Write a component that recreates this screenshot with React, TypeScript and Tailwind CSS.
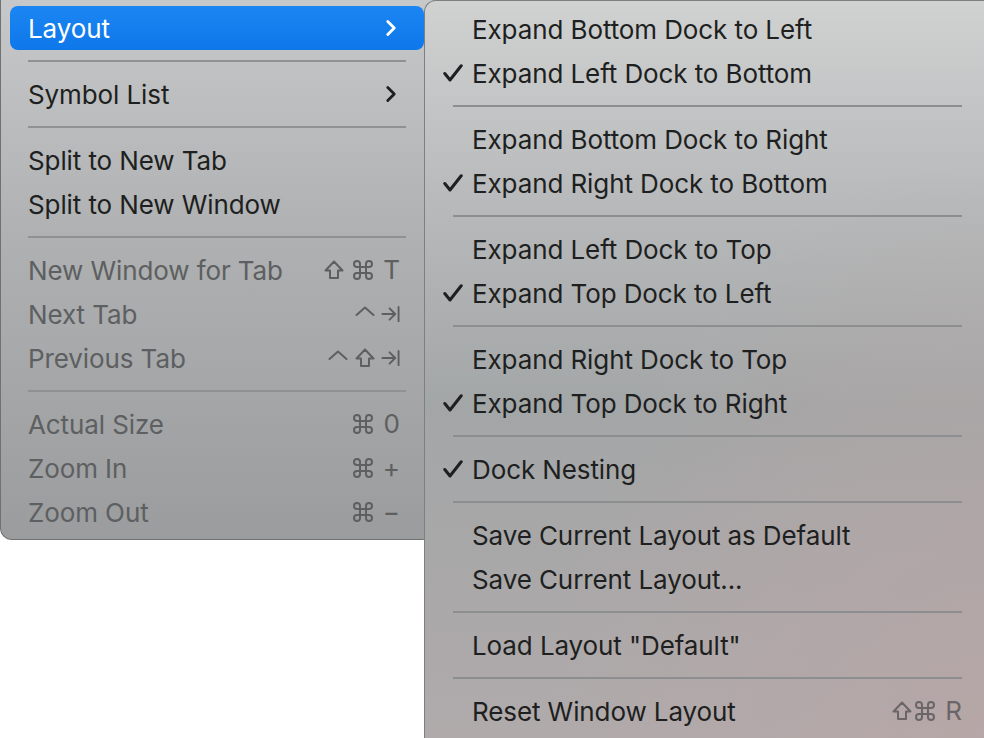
import { ChevronRight } from "lucide-react";

const FONT = "font-['Inter','Noto_Sans',sans-serif]";

type Mod = "shift" | "cmd" | "ctrl";

const ShiftIcon = () => (
  <svg viewBox="0 0 20 20" className="w-[20px] h-[20px]" fill="none" stroke="currentColor" strokeWidth={2} strokeLinejoin="round">
    <path d="M10 1.5 L1.5 10.5 H6 V18 H14 V10.5 H18.5 Z" />
  </svg>
);

const CmdIcon = () => (
  <svg viewBox="0 0 24 24" className="w-[24px] h-[24px]" fill="none" stroke="currentColor" strokeWidth={2} strokeLinecap="round" strokeLinejoin="round">
    <path d="M15 6v12a3 3 0 1 0 3-3H6a3 3 0 1 0 3 3V6a3 3 0 1 0-3 3h12a3 3 0 1 0-3-3" />
  </svg>
);

const CtrlIcon = () => (
  <svg viewBox="0 0 20 20" className="w-[20px] h-[20px]" fill="none" stroke="currentColor" strokeWidth={2} strokeLinecap="round" strokeLinejoin="round">
    <path d="M1.5 11 L10 3.5 L18.5 11" />
  </svg>
);

const TabIcon = () => (
  <svg viewBox="0 0 20 20" className="w-[19px] h-[20px]" fill="none" stroke="currentColor" strokeWidth={2} strokeLinecap="round" strokeLinejoin="round">
    <path d="M1.5 10 H14.5 M9 4 L15 10 L9 16 M18.5 2.5 V17.5" />
  </svg>
);

const MOD_ICONS: Record<Mod, () => React.ReactElement> = {
  shift: ShiftIcon,
  cmd: CmdIcon,
  ctrl: CtrlIcon,
};

const CheckIcon = () => (
  <svg viewBox="0 0 20 18" className="w-[20px] h-[18px]" fill="none" stroke="currentColor" strokeWidth={3} strokeLinecap="round" strokeLinejoin="round">
    <path d="M1.8 9.5 L7 16 L18.2 1.8" />
  </svg>
);

type Shortcut = { mods: Mod[]; key: React.ReactNode };

type Item =
  | { type: "sep" }
  | {
      type: "item";
      label: string;
      disabled?: boolean;
      submenu?: boolean;
      active?: boolean;
      checked?: boolean;
      shortcut?: Shortcut;
    };

const leftItems: Item[] = [
  { type: "item", label: "Layout", submenu: true, active: true },
  { type: "sep" },
  { type: "item", label: "Symbol List", submenu: true },
  { type: "sep" },
  { type: "item", label: "Split to New Tab" },
  { type: "item", label: "Split to New Window" },
  { type: "sep" },
  { type: "item", label: "New Window for Tab", disabled: true, shortcut: { mods: ["shift", "cmd"], key: "T" } },
  { type: "item", label: "Next Tab", disabled: true, shortcut: { mods: ["ctrl"], key: <TabIcon /> } },
  { type: "item", label: "Previous Tab", disabled: true, shortcut: { mods: ["ctrl", "shift"], key: <TabIcon /> } },
  { type: "sep" },
  { type: "item", label: "Actual Size", disabled: true, shortcut: { mods: ["cmd"], key: "0" } },
  { type: "item", label: "Zoom In", disabled: true, shortcut: { mods: ["cmd"], key: "+" } },
  { type: "item", label: "Zoom Out", disabled: true, shortcut: { mods: ["cmd"], key: "−" } },
];

const rightItems: Item[] = [
  { type: "item", label: "Expand Bottom Dock to Left" },
  { type: "item", label: "Expand Left Dock to Bottom", checked: true },
  { type: "sep" },
  { type: "item", label: "Expand Bottom Dock to Right" },
  { type: "item", label: "Expand Right Dock to Bottom", checked: true },
  { type: "sep" },
  { type: "item", label: "Expand Left Dock to Top" },
  { type: "item", label: "Expand Top Dock to Left", checked: true },
  { type: "sep" },
  { type: "item", label: "Expand Right Dock to Top" },
  { type: "item", label: "Expand Top Dock to Right", checked: true },
  { type: "sep" },
  { type: "item", label: "Dock Nesting", checked: true },
  { type: "sep" },
  { type: "item", label: "Save Current Layout as Default" },
  { type: "item", label: "Save Current Layout..." },
  { type: "sep" },
  { type: "item", label: 'Load Layout "Default"' },
  { type: "sep" },
  { type: "item", label: "Reset Window Layout", shortcut: { mods: ["shift", "cmd"], key: "R" } },
];

// modifiers on the left, key in a fixed right-aligned column
const ShortcutView = ({ shortcut, tight }: { shortcut: Shortcut; tight?: boolean }) => (
  <div className="flex items-center">
    <div className={tight ? "flex items-center gap-[1px]" : "flex items-center gap-[7px]"}>
      {shortcut.mods.map((m, i) => {
        const Icon = MOD_ICONS[m];
        return <Icon key={i} />;
      })}
    </div>
    <div className="w-[25px] flex justify-end text-[26px] leading-none">{shortcut.key}</div>
  </div>
);

const LeftMenu = () => (
  <div className="w-[434px] shrink-0 rounded-b-[12px] border border-t-0 border-[#6f7173] bg-[linear-gradient(to_bottom,#c6c8c9,#aeb0b1_45%,#9a9c9e)] pt-[6px] pb-[5px] px-[9px]">
    {leftItems.map((it, i) =>
      it.type === "sep" ? (
        <div key={i} className="h-[22px] flex items-center pl-[18px] pr-[18px]">
          <div className="h-[2px] w-full bg-[#8f9193]" />
        </div>
      ) : (
        <div
          key={i}
          className={
            "h-[44px] flex items-center pl-[18px] pr-[24px] rounded-[8px] " +
            (it.active
              ? "bg-[linear-gradient(to_bottom,#1b86f2,#0e77ea)] text-white"
              : it.disabled
              ? "text-[#5d5f61]"
              : "text-[#1e1f20]")
          }
        >
          <span className="flex-1 text-[26px] leading-none pt-[1px] tracking-[-0.1px]">{it.label}</span>
          {it.submenu && <ChevronRight size={26} strokeWidth={2.6} className="-mr-[4px]" />}
          {it.shortcut && <ShortcutView shortcut={it.shortcut} />}
        </div>
      )
    )}
  </div>
);

const RightMenu = () => (
  <div className="relative -ml-[10px] flex-1 h-[738px] rounded-tl-[12px] border-l border-t border-[#7d7f81] bg-[linear-gradient(to_bottom,#d0d2d2,#b9bbbc_25%,#a3a6a7_55%,#aaa8a9_80%,#b0aaab)] pt-[6px]">
    <div className="absolute inset-0 rounded-tl-[12px] bg-[radial-gradient(ellipse_at_100%_100%,rgba(185,165,165,0.7),rgba(185,165,165,0)_55%)]" />
    <div className="relative">
      {rightItems.map((it, i) =>
        it.type === "sep" ? (
          <div key={i} className="h-[22px] flex items-center pl-[28px] pr-[22px]">
            <div className="h-[2px] w-full bg-[#8c8e90]" />
          </div>
        ) : (
          <div key={i} className="h-[44px] flex items-center pl-[18px] pr-[22px] text-[#1e1f20]">
            <div className="w-[29px] flex items-center">{it.checked && <CheckIcon />}</div>
            <span className="flex-1 text-[26px] leading-none pt-[1px] tracking-[-0.1px]">{it.label}</span>
            {it.shortcut && (
              <div className="text-[#6a6667]">
                <ShortcutView shortcut={it.shortcut} tight />
              </div>
            )}
          </div>
        )
      )}
    </div>
  </div>
);

export default function App() {
  return (
    <div className={"w-[984px] h-[738px] overflow-hidden bg-white flex items-start " + FONT}>
      <LeftMenu />
      <RightMenu />
    </div>
  );
}
